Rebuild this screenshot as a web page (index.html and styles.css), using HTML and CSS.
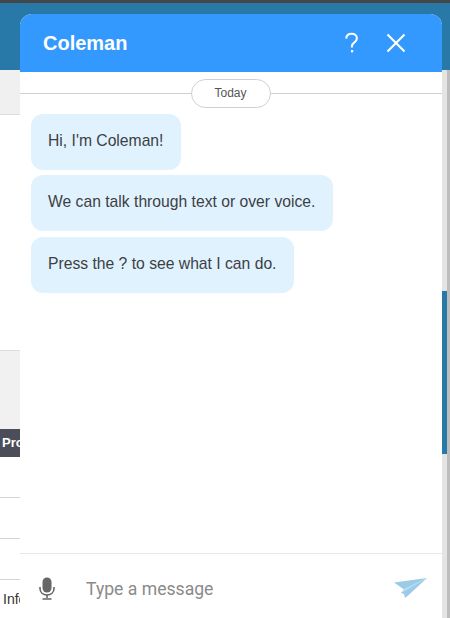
FILE: index.html
```html
<!DOCTYPE html>
<html lang="en">
<head>
<meta charset="utf-8">
<title>Coleman</title>
<link rel="stylesheet" href="styles.css">
</head>
<body>
<div class="page">
  <div class="topline"></div>
  <div class="banner"></div>
  <div class="band band-top"></div>
  <div class="blank blank-a"></div>
  <div class="band band-mid"></div>
  <div class="th">Program</div>
  <div class="row row-a"></div>
  <div class="row row-b"></div>
  <div class="row row-c"></div>
  <div class="row-text">Information</div>
</div>
<div class="scrollbar"><div class="thumb"></div></div>
<section class="chat">
  <header class="chat-head">
    <h1 class="chat-title">Coleman</h1>
    <div class="head-actions">
      <svg class="icon-help" width="16" height="24" viewBox="0 0 16 24"><path d="M2.200 7.600C2.400 4.400 4.700 2.800 7.600 2.800c3.100 0 5.300 1.800 5.300 4.500 0 2.100-1.100 3.200-2.700 4.300-1.700 1.100-2.300 2-2.300 3.800v1" fill="none" stroke="#fff" stroke-width="2"/><rect x="7" y="19" width="2.200" height="2.400" fill="#fff"/></svg>
      <svg class="icon-close" width="20" height="20" viewBox="0 0 20 20"><path d="M1.500 1.500l17 17M18.500 1.500l-17 17" fill="none" stroke="#fff" stroke-width="2.100"/></svg>
    </div>
  </header>
  <div class="chat-body">
    <div class="day"><span class="day-pill">Today</span></div>
    <ul class="msgs">
      <li class="msg">Hi, I'm Coleman!</li>
      <li class="msg">We can talk through text or over voice.</li>
      <li class="msg">Press the ? to see what I can do.</li>
    </ul>
  </div>
  <footer class="chat-foot">
    <svg class="icon-mic" width="16" height="23" viewBox="0 0 16 23"><rect x="3.500" y="0.500" width="9" height="15" rx="4.500" fill="#666"/><path d="M1 10v1.500C1 15.500 4 18 8 18s7-2.500 7-6.500V10" fill="none" stroke="#666" stroke-width="1.600"/><path d="M8 18v3M3.500 22h9" fill="none" stroke="#666" stroke-width="1.600"/></svg>
    <span class="placeholder">Type a message</span>
    <svg class="icon-send" width="34" height="20" viewBox="0 0 34 20"><path d="M0 4.500L33 0 10 11.500z" fill="#9ccbe8"/><path d="M33 0L13 18.500 11 20l-1-4-3-1 3-3.500z" fill="#9ccbe8"/><path d="M33 0L10 11.500 7 15z" fill="#c3e0f2"/></svg>
  </footer>
</section>
</body>
</html>
```
FILE: styles.css
```css
html, body {
  margin: 0;
  height: 618px;
  overflow: hidden;
  background: #fff;
  font-family: "Liberation Sans", Arial, sans-serif;
}
.page { width: 450px; height: 618px; overflow: hidden; }
.topline { height: 3px; background: #44474a; }
.banner { height: 67px; background: #2878a8; }
.band-top { height: 44px; background: #f0f0f0; border-bottom: 1px solid #ddd; }
.blank-a { height: 235px; }
.band-mid { height: 78px; background: #f1f1f1; border-top: 1px solid #ddd; }
.th { height: 28px; padding-left: 2px; background: #4b4d59; color: #fff; font-size: 13px; font-weight: 700; line-height: 28px; white-space: nowrap; }
.row { height: 40px; border-bottom: 1px solid #d4d4d4; box-sizing: content-box; }
.row-text { padding-left: 3px; margin-top: 11px; font-size: 14px; color: #333; white-space: nowrap; }
.scrollbar {
  position: absolute; left: 442px; top: 70px; width: 5px; height: 548px;
  background: #e4e4e4; border-right: 3px solid #bdbdbd;
}
.thumb { margin-top: 221px; height: 163px; background: #2878a8; }
.chat {
  position: absolute; left: 20px; top: 14px; width: 422px; height: 604px;
  display: flex; flex-direction: column;
  background: #fff; border-radius: 12px; overflow: hidden;
}
.chat-head {
  flex: none; height: 58px; display: flex; align-items: center; justify-content: space-between;
  padding: 0 36px 0 23px; background: #3399ff; color: #fff;
}
.chat-title { margin: 0; font-size: 20px; font-weight: 700; }
.head-actions { display: flex; align-items: center; gap: 26px; }
.chat-body { flex: 1; min-height: 0; }
.day { position: relative; height: 36px; display: flex; justify-content: center; }
.day::before { content: ""; position: absolute; left: 0; right: 0; top: 21px; height: 1px; background: #d0d0d0; }
.day-pill {
  position: relative; box-sizing: border-box; width: 80px; height: 29px; margin-top: 7px; margin-left: -1px;
  border: 1px solid #cfcfcf; border-radius: 15px; background: #fff;
  color: #555; font-size: 12px; line-height: 27px; text-align: center;
}
.msgs { list-style: none; margin: 5.5px 0 0 11px; padding: 0; display: flex; flex-direction: column; align-items: flex-start; gap: 5.5px; }
.msg {
  box-sizing: border-box; height: 56px; padding: 0 18px 0 17px; border-radius: 12px;
  background: #e1f2ff; color: #3c3f44; font-size: 15.7px; line-height: 54px;
}
.chat-foot {
  flex: none; height: 65px; box-sizing: border-box; display: flex; align-items: center;
  padding: 5px 14px 0 19px; border-top: 1px solid #e8e8e8; position: relative;
}
.placeholder { margin-left: 31px; color: #8a8a8a; font-size: 17.6px; font-family: Roboto, "Liberation Sans", sans-serif; }
.icon-send { margin-left: auto; margin-top: -2px; }
```
